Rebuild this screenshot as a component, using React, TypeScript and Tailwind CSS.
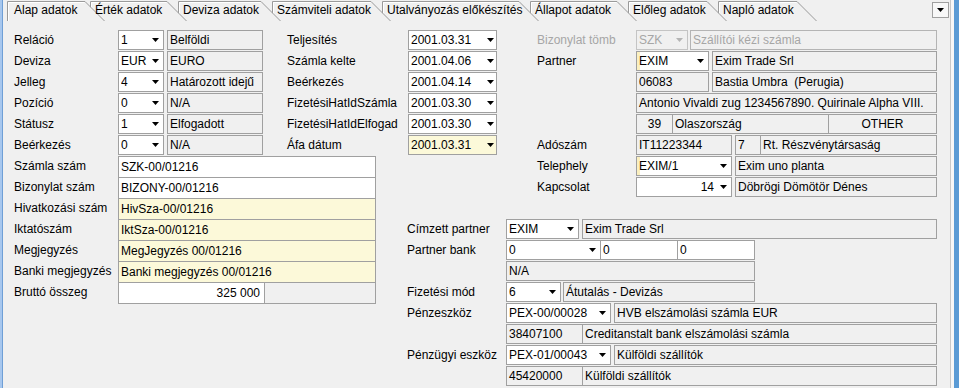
import React from "react";

function Arrow({ gray }: { gray?: boolean }) {
  return (
    <svg width="7" height="4" viewBox="0 0 7 4" className="shrink-0">
      <path d="M0 0H7L3.5 4Z" fill={gray ? "#b4b4b4" : "#000000"} />
    </svg>
  );
}

type ComboProps = { text: string; cls: string; right?: boolean; gray?: boolean; pr?: string };

function Combo({ text, cls, right, gray, pr }: ComboProps) {
  return (
    <div
      className={`flex items-center border border-[#a0a0a0] pl-[2px] shrink-0 ${pr ?? "pr-[4px]"} ${cls}`}
    >
      <span
        className={`flex-1 whitespace-nowrap overflow-hidden ${right ? "text-right pr-[6px]" : ""} ${
          gray ? "text-[#a6a6a6]" : ""
        }`}
      >
        {text}
      </span>
      <Arrow gray={gray} />
    </div>
  );
}

function Box({ text, cls }: { text: string; cls: string }) {
  return (
    <div
      className={`flex items-center border border-[#a0a0a0] px-[2px] whitespace-pre overflow-hidden shrink-0 ${cls}`}
    >
      {text}
    </div>
  );
}

function Row({ children }: { children: React.ReactNode }) {
  return <div className="flex h-[21px] items-start shrink-0">{children}</div>;
}

function Label({ text, cls }: { text: string; cls: string }) {
  return <div className={`shrink-0 leading-[20px] whitespace-nowrap ${cls}`}>{text}</div>;
}

type TabDef = { label: string; w: number; first?: boolean; z: string };

const tabs: TabDef[] = [
  { label: "Alap adatok", w: 88, first: true, z: "z-[9]" },
  { label: "Érték adatok", w: 88, z: "z-[8]" },
  { label: "Deviza adatok", w: 94, z: "z-[7]" },
  { label: "Számviteli adatok", w: 110, z: "z-[6]" },
  { label: "Utalványozás előkészítés", w: 148, z: "z-[5]" },
  { label: "Állapot adatok", w: 98, z: "z-[4]" },
  { label: "Előleg adatok", w: 90, z: "z-[3]" },
  { label: "Napló adatok", w: 90, z: "z-[2]" },
];

function Tab({ t }: { t: TabDef }) {
  const lx = t.first ? 0.5 : -4.5;
  const e = t.first ? t.w - 10 : t.w - 16;
  return (
    <div className="relative h-[21px] shrink-0" style={{ width: t.w }}>
      <svg
        className={`absolute left-0 top-0 overflow-visible ${t.z}`}
        width={t.w}
        height={21}
      >
        <polygon points={`${lx},21 ${lx},1.5 ${e},1.5 ${e + 19.5},21`} fill="#f0f0f0" />
        <polyline
          points={`${lx},21 ${lx},1.5 ${e},1.5 ${e + 19.5},21`}
          fill="none"
          stroke="#9a9a9a"
          strokeWidth={1}
        />
        <polyline
          points={`${lx + 1},21 ${lx + 1},2.5 ${e - 0.5},2.5`}
          fill="none"
          stroke="#ffffff"
          strokeWidth={1}
        />
      </svg>
      <span
        className={`relative z-[20] block leading-[21px] whitespace-nowrap ${t.first ? "pl-[7px]" : ""}`}
      >
        {t.label}
      </span>
    </div>
  );
}

function TabStrip() {
  return (
    <div className="flex h-[21px] shrink-0 pl-[4px]">
      {tabs.map((t) => (
        <Tab key={t.label} t={t} />
      ))}
      <div className="flex-1" />
      <div className="mt-[2px] mr-[1px] flex h-[16px] w-[17px] items-center justify-center border border-[#a0a0a0] bg-[#f8f8f8]">
        <Arrow />
      </div>
    </div>
  );
}

const leftTop: [string, string, string][] = [
  ["Reláció", "1", "Belföldi"],
  ["Deviza", "EUR", "EURO"],
  ["Jelleg", "4", "Határozott idejű"],
  ["Pozíció", "0", "N/A"],
  ["Státusz", "1", "Elfogadott"],
  ["Beérkezés", "0", "N/A"],
];

const middle: [string, string][] = [
  ["Teljesítés", "2001.03.31"],
  ["Számla kelte", "2001.04.06"],
  ["Beérkezés", "2001.04.14"],
  ["FizetésiHatIdSzámla", "2001.03.30"],
  ["FizetésiHatIdElfogad", "2001.03.30"],
];

const YEL = "bg-[#fcf9d9]";

function Form() {
  return (
    <div className="grid grid-cols-[273px_88px_32px_90px_40px_400px] grid-rows-[repeat(17,21px)] pl-[11px] mt-[9px]">
      {/* left top */}
      <div className="col-start-1 row-start-1 row-span-6 flex flex-col">
        {leftTop.map(([l, c, d]) => (
          <Row key={l}>
            <Label text={l} cls="w-[104px]" />
            <Combo text={c} cls="h-[20px] w-[46px] bg-white" />
            <Box text={d} cls="h-[20px] w-[96px] ml-[3px]" />
          </Row>
        ))}
      </div>

      {/* middle dates */}
      <div className="col-start-2 col-span-3 row-start-1 row-span-6 flex flex-col">
        {middle.map(([l, v]) => (
          <Row key={l}>
            <Label text={l} cls="w-[121px]" />
            <Combo text={v} cls="h-[20px] w-[89px] bg-white" pr="pr-[2px]" />
          </Row>
        ))}
        <Row>
          <Label text="Áfa dátum" cls="w-[121px]" />
          <Combo text="2001.03.31" cls={`h-[20px] w-[89px] ${YEL}`} pr="pr-[2px]" />
        </Row>
      </div>

      {/* right partner */}
      <div className="col-start-6 row-start-1 row-span-8 flex flex-col">
        <Row>
          <Label text="Bizonylat tömb" cls="w-[99px] text-[#a6a6a6]" />
          <Combo text="SZK" gray cls="h-[20px] w-[52px] bg-[#f0f0f0] border-[#c4c4c4]" />
          <Box text="Szállítói kézi számla" cls="h-[20px] w-[247px] ml-[2px] text-[#a6a6a6] border-[#b4b4b4]" />
        </Row>
        <Row>
          <Label text="Partner" cls="w-[99px]" />
          <Combo text="EXIM" cls="h-[20px] w-[73px] bg-white shadow-[inset_3px_0_0_#fbf0c0]" />
          <Box text="Exim Trade Srl" cls="h-[20px] w-[225px] ml-[3px]" />
        </Row>
        <Row>
          <Label text="" cls="w-[99px]" />
          <Box text="06083" cls="h-[20px] w-[73px]" />
          <Box text="Bastia Umbra  (Perugia)" cls="h-[20px] w-[225px] ml-[3px]" />
        </Row>
        <Row>
          <Label text="" cls="w-[99px]" />
          <Box text="Antonio Vivaldi zug 1234567890. Quirinale Alpha VIII." cls="h-[20px] w-[301px]" />
        </Row>
        <Row>
          <Label text="" cls="w-[99px]" />
          <Box text="39" cls="h-[20px] w-[37px] justify-center" />
          <Box text="Olaszország" cls="h-[20px] w-[157px] -ml-px" />
          <Box text="OTHER" cls="h-[20px] w-[109px] -ml-px justify-center" />
        </Row>
        <Row>
          <Label text="Adószám" cls="w-[99px]" />
          <Box text="IT11223344" cls="h-[20px] w-[96px]" />
          <Box text="7" cls="h-[20px] w-[26px] ml-[3px]" />
          <Box text="Rt. Részvénytársaság" cls="h-[20px] w-[177px] -ml-px" />
        </Row>
        <Row>
          <Label text="Telephely" cls="w-[99px]" />
          <Combo text="EXIM/1" cls="h-[20px] w-[96px] bg-white shadow-[inset_3px_0_0_#fbf0c0]" />
          <Box text="Exim uno planta" cls="h-[20px] w-[202px] ml-[3px]" />
        </Row>
        <Row>
          <Label text="Kapcsolat" cls="w-[99px]" />
          <Combo text="14" right cls="h-[20px] w-[96px] bg-white" />
          <Box text="Döbrögi Dömötör Dénes" cls="h-[20px] w-[202px] ml-[3px]" />
        </Row>
      </div>

      {/* left wide */}
      <div className="col-start-1 col-span-2 row-start-7 row-span-7 flex flex-col">
        <Row>
          <Label text="Számla szám" cls="w-[104px]" />
          <Box text="SZK-00/01216" cls="h-[22px] w-[258px] bg-white" />
        </Row>
        <Row>
          <Label text="Bizonylat szám" cls="w-[104px]" />
          <Box text="BIZONY-00/01216" cls="h-[22px] w-[258px] bg-white" />
        </Row>
        <Row>
          <Label text="Hivatkozási szám" cls="w-[104px]" />
          <Box text="HivSza-00/01216" cls={`h-[22px] w-[258px] ${YEL}`} />
        </Row>
        <Row>
          <Label text="Iktatószám" cls="w-[104px]" />
          <Box text="IktSza-00/01216" cls={`h-[22px] w-[258px] ${YEL}`} />
        </Row>
        <Row>
          <Label text="Megjegyzés" cls="w-[104px]" />
          <Box text="MegJegyzés 00/01216" cls={`h-[22px] w-[258px] ${YEL}`} />
        </Row>
        <Row>
          <Label text="Banki megjegyzés" cls="w-[104px]" />
          <Box text="Banki megjegyzés 00/01216" cls={`h-[22px] w-[258px] ${YEL}`} />
        </Row>
        <Row>
          <Label text="Bruttó összeg" cls="w-[104px]" />
          <Box text="325 000" cls="h-[22px] w-[147px] bg-white justify-end pr-[4px]" />
          <Box text="" cls="h-[22px] w-[112px] -ml-px" />
        </Row>
      </div>

      {/* lower right */}
      <div className="col-start-4 col-span-3 row-start-10 row-span-8 flex flex-col">
        <Row>
          <Label text="Címzett partner" cls="w-[99px]" />
          <Combo text="EXIM" cls="h-[20px] w-[73px] bg-white" />
          <Box text="Exim Trade Srl" cls="h-[20px] w-[355px] ml-[3px]" />
        </Row>
        <Row>
          <Label text="Partner bank" cls="w-[99px]" />
          <Combo text="0" cls="h-[20px] w-[95px] bg-white" />
          <Box text="0" cls="h-[20px] w-[78px] -ml-px bg-white" />
          <Box text="0" cls="h-[20px] w-[78px] -ml-px bg-white" />
        </Row>
        <Row>
          <Label text="" cls="w-[99px]" />
          <Box text="N/A" cls="h-[20px] w-[249px]" />
        </Row>
        <Row>
          <Label text="Fizetési mód" cls="w-[99px]" />
          <Combo text="6" cls="h-[20px] w-[55px] bg-white" />
          <Box text="Átutalás - Devizás" cls="h-[20px] w-[192px] ml-[2px]" />
        </Row>
        <Row>
          <Label text="Pénzeszköz" cls="w-[99px]" />
          <Combo text="PEX-00/00028" cls="h-[20px] w-[105px] bg-white" />
          <Box text="HVB elszámolási számla EUR" cls="h-[20px] w-[323px] ml-[3px]" />
        </Row>
        <Row>
          <Label text="" cls="w-[99px]" />
          <Box text="38407100" cls="h-[20px] w-[77px]" />
          <Box text="Creditanstalt bank elszámolási számla" cls="h-[20px] w-[355px] -ml-px" />
        </Row>
        <Row>
          <Label text="Pénzügyi eszköz" cls="w-[99px]" />
          <Combo text="PEX-01/00043" cls="h-[20px] w-[105px] bg-white" />
          <Box text="Külföldi szállítók" cls="h-[20px] w-[323px] ml-[3px]" />
        </Row>
        <Row>
          <Label text="" cls="w-[99px]" />
          <Box text="45420000" cls="h-[20px] w-[77px]" />
          <Box text="Külföldi szállítók" cls="h-[20px] w-[355px] -ml-px" />
        </Row>
      </div>
    </div>
  );
}

export default function App() {
  return (
    <div className="flex w-[959px] h-[388px] overflow-hidden bg-[#f0f0f0] text-[12px] text-black font-['Liberation_Sans',Arial,sans-serif]">
      <div className="w-[2px] shrink-0 bg-[#a7c7ee]" />
      <div className="w-px shrink-0 bg-[#6f9fd6]" />
      <div className="flex flex-col w-[947px] shrink-0">
        <TabStrip />
        <Form />
      </div>
      <div className="w-px shrink-0 bg-[#c8c8c8]" />
      <div className="w-[3px] shrink-0 bg-[#f7f7f7]" />
      <div className="w-[5px] shrink-0 bg-[#5b9bd5]" />
    </div>
  );
}
